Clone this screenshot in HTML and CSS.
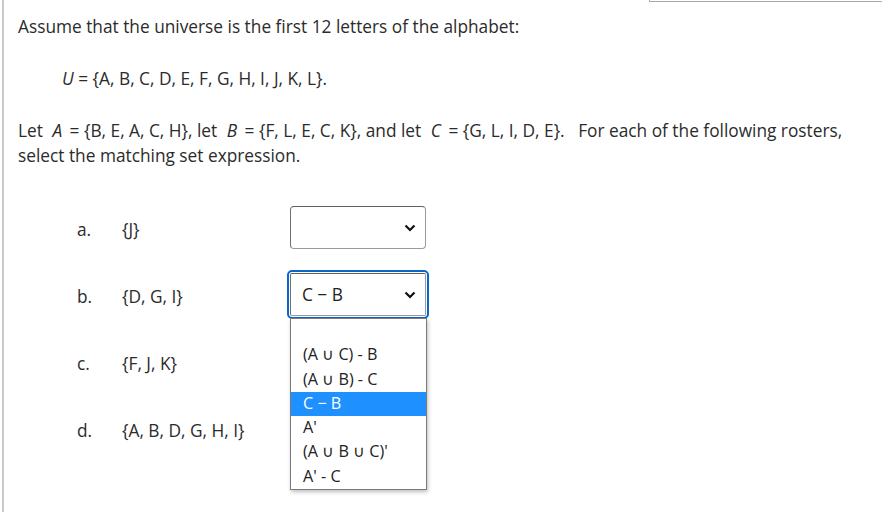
FILE: index.html
```html
<!DOCTYPE html>
<html lang="en">
<head>
    <meta charset="UTF-8">
    <title>Set expressions</title>
    <link rel="stylesheet" href="styles.css">
</head>
<body>
    <div class="page">
        <div class="top">
            <div class="top-box"></div>
        </div>
        <div class="content">
            <p class="intro">Assume that the universe is the first 12 letters of the alphabet:</p>
            <p class="universe"><i>U</i> = {A, B, C, D, E, F, G, H, I, J, K, L}.</p>
            <p class="sets">Let <i>A</i> = {B, E, A, C, H}, let <i>B</i> = {F, L, E, C, K}, and let <i>C</i> = {G, L, I, D, E}.&nbsp;&nbsp; For each of the following rosters, select the matching set expression.</p>

            <div class="questions">
                <div class="row">
                    <span class="letter">a.</span>
                    <span class="roster">{J}</span>
                    <div class="select">
                        <span class="value"></span>
                        <svg class="chev" width="12" height="8" viewBox="0 0 12 8"><polyline points="1.5,1.5 6,6 10.5,1.5" fill="none" stroke="#111" stroke-width="2.2"/></svg>
                    </div>
                </div>
                <div class="row">
                    <span class="letter">b.</span>
                    <span class="roster">{D, G, I}</span>
                    <div class="select focused">
                        <span class="value">C − B</span>
                        <svg class="chev" width="12" height="8" viewBox="0 0 12 8"><polyline points="1.5,1.5 6,6 10.5,1.5" fill="none" stroke="#111" stroke-width="2.2"/></svg>
                        <ul class="options">
                            <li>&nbsp;</li>
                            <li>(A ∪ C) - B</li>
                            <li>(A ∪ B) - C</li>
                            <li class="active">C − B</li>
                            <li>A'</li>
                            <li>(A ∪ B ∪ C)'</li>
                            <li>A' - C</li>
                        </ul>
                    </div>
                </div>
                <div class="row">
                    <span class="letter">c.</span>
                    <span class="roster">{F, J, K}</span>
                    <div class="select">
                        <span class="value"></span>
                        <svg class="chev" width="12" height="8" viewBox="0 0 12 8"><polyline points="1.5,1.5 6,6 10.5,1.5" fill="none" stroke="#111" stroke-width="2.2"/></svg>
                    </div>
                </div>
                <div class="row">
                    <span class="letter">d.</span>
                    <span class="roster">{A, B, D, G, H, I}</span>
                    <div class="select">
                        <span class="value"></span>
                        <svg class="chev" width="12" height="8" viewBox="0 0 12 8"><polyline points="1.5,1.5 6,6 10.5,1.5" fill="none" stroke="#111" stroke-width="2.2"/></svg>
                    </div>
                </div>
            </div>
        </div>
    </div>
</body>
</html>
```

FILE: styles.css
```css
body {
    margin: 0;
    font-family: "Open Sans", sans-serif;
    font-size: 17.3px;
    color: #2b2b2b;
    background: #fff;
}
.page {
    margin-left: 2px;
    border-left: 2px solid #c9c9c9;
    height: 512px;
    box-sizing: border-box;
}
.top {
    display: flex;
    justify-content: flex-end;
    height: 2px;
}
.top-box {
    width: 232px;
    height: 1px;
    border-left: 1px solid #a9a9a9;
    border-bottom: 1px solid #a9a9a9;
}
.content {
    padding-left: 14px;
}
p {
    margin: 0;
    line-height: 25px;
}
.intro {
    margin-top: 12px;
}
.universe {
    margin-top: 27px;
    padding-left: 44px;
}
.sets {
    margin-top: 27px;
    padding-right: 20px;
}
.sets i {
    padding: 0 3px 0 5px;
}
.questions {
    margin-top: 38px;
    padding-left: 59px;
    display: flex;
    flex-direction: column;
    gap: 24px;
}
.row {
    display: flex;
    align-items: center;
    height: 43px;
}
.letter {
    width: 45px;
    padding-top: 3px;
}
.roster {
    width: 168px;
    padding-top: 3px;
}
.select {
    position: relative;
    width: 136px;
    height: 43px;
    box-sizing: border-box;
    border: 1px solid #9a9a9a;
    border-top-color: #5f5f5f;
    border-left-color: #6f6f6f;
    border-radius: 4px;
    display: flex;
    align-items: center;
    justify-content: space-between;
    padding: 0 9px 0 11px;
}
.select.focused {
    outline: 2px solid #0a66c8;
    outline-offset: 1px;
    border-radius: 2px;
}
.value {
    color: #222;
}
.options {
    position: absolute;
    top: 44px;
    left: -1px;
    width: 137px;
    margin: 0;
    padding: 0;
    list-style: none;
    background: #fff;
    border: 1px solid #7a7a7a;
    box-shadow: 1px 2px 4px rgba(0, 0, 0, 0.25);
    box-sizing: border-box;
    z-index: 2;
}
.options li {
    height: 24.3px;
    line-height: 22.3px;
    padding-left: 12px;
    font-size: 16.2px;
    color: #222;
}
.options li.active {
    background: #1e90ff;
    color: #fff;
}
```
